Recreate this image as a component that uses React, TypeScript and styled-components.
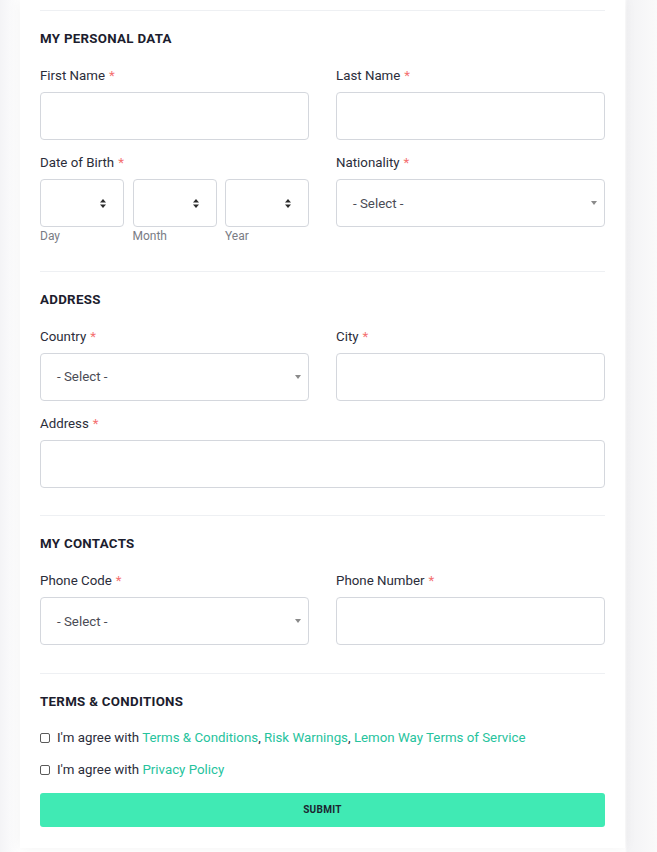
import React from "react";
import styled, { createGlobalStyle } from "styled-components";

const Global = createGlobalStyle`
  html, body { margin: 0; padding: 0; }
  body {
    background: #f6f7fa;
    font-family: Roboto, "Liberation Sans", Arial, sans-serif;
    color: #2b2d3a;
  }
  * { box-sizing: border-box; }
`;

const Page = styled.div`
  padding: 0 32px 4px 20px;
  background: linear-gradient(to right, #f4f4f6 0, #ffffff 20px, #ffffff 625px, #f3f3f5 627px, #fafafa 657px);
`;

const Card = styled.form`
  background: #fff;
  box-shadow: 0 0 12px rgba(0, 0, 0, 0.05);
  padding: 10px 20px 21px;
`;

const Section = styled.section`
  border-top: 1px solid #eef0f3;
  padding: 20px 0 27.5px;
  &:last-child { padding-bottom: 0; }
`;

const Heading = styled.h2<{ $tight?: boolean }>`
  margin: 0 0 ${(p) => (p.$tight ? "0" : "20px")};
  font-size: 13.3px;
  line-height: 16px;
  font-weight: 700;
  color: #1c1d2e;
  letter-spacing: 0.3px;
`;

const Grid = styled.div`
  display: grid;
  grid-template-columns: 1fr 1fr;
  column-gap: 27px;
  row-gap: 14px;
`;

const Field = styled.div<{ $full?: boolean }>`
  display: flex;
  flex-direction: column;
  grid-column: ${(p) => (p.$full ? "1 / -1" : "auto")};
`;

const Label = styled.label`
  font-size: 13.3px;
  line-height: 17px;
  color: #2b2d3a;
  margin-bottom: 8px;
`;

const Star = styled.span`
  color: #f47070;
  margin-left: 4px;
`;

const TextInput = styled.input`
  height: 48px;
  width: 100%;
  border: 1px solid #d4d7dd;
  border-radius: 4px;
  background: #fff;
  padding: 0 16px;
  font: inherit;
  outline: none;
`;

const SelectBox = styled.div`
  position: relative;
  height: 48px;
  border: 1px solid #d4d7dd;
  border-radius: 4px;
  background: #fff;
  display: flex;
  align-items: center;
  padding: 0 16px;
  font-size: 13.3px;
  color: #4a4c55;
`;

const Caret = styled.span`
  position: absolute;
  right: 7px;
  top: 50%;
  margin-top: -2px;
  width: 0;
  height: 0;
  border-left: 3px solid transparent;
  border-right: 3px solid transparent;
  border-top: 4px solid #8a8a8a;
`;

const UpDown = styled.svg`
  position: absolute;
  right: 17px;
  top: 50%;
  margin-top: -4px;
`;

const DateRow = styled.div`
  display: grid;
  grid-template-columns: repeat(3, 84px);
  column-gap: 8.5px;
`;

const DatePart = styled.div`
  display: flex;
  flex-direction: column;
`;

const SubLabel = styled.span`
  font-size: 12px;
  line-height: 14px;
  color: #7a7c85;
  margin-top: 2px;
`;

const CheckRow = styled.label<{ $first?: boolean }>`
  display: flex;
  align-items: center;
  font-size: 13.3px;
  line-height: 18px;
  color: #2b2d3a;
  margin-top: ${(p) => (p.$first ? "19px" : "14px")};
`;

const Box = styled.input`
  appearance: none;
  width: 10px;
  height: 10px;
  margin: 0 7px 0 0;
  border: 1px solid #5a5a5a;
  border-radius: 2px;
  background: #fff;
`;

const Link = styled.a`
  color: #26c39d;
  text-decoration: none;
`;

const Submit = styled.button`
  margin-top: 14px;
  width: 100%;
  height: 34px;
  border: none;
  border-radius: 3px;
  background: #40eab4;
  color: #1c2530;
  font-family: Roboto, "Liberation Sans", Arial, sans-serif;
  font-size: 10px;
  font-weight: 700;
  letter-spacing: 0.3px;
`;

const Req = ({ children }: { children: React.ReactNode }) => (
  <Label>
    {children}
    <Star>*</Star>
  </Label>
);

const Select = ({ text }: { text?: string }) => (
  <SelectBox>
    {text}
    <Caret />
  </SelectBox>
);

const SmallSelect = () => (
  <SelectBox>
    <UpDown width="6" height="9" viewBox="0 0 6 9">
      <path d="M0 3.6 L3 0 L6 3.6 Z" fill="#2b2b2b" />
      <path d="M0 5.4 L3 9 L6 5.4 Z" fill="#2b2b2b" />
    </UpDown>
  </SelectBox>
);

export default function App() {
  return (
    <>
      <Global />
      <Page>
        <Card onSubmit={(e) => e.preventDefault()}>
          <Section>
            <Heading>MY PERSONAL DATA</Heading>
            <Grid>
              <Field>
                <Req>First Name</Req>
                <TextInput />
              </Field>
              <Field>
                <Req>Last Name</Req>
                <TextInput />
              </Field>
              <Field>
                <Req>Date of Birth</Req>
                <DateRow>
                  {["Day", "Month", "Year"].map((d) => (
                    <DatePart key={d}>
                      <SmallSelect />
                      <SubLabel>{d}</SubLabel>
                    </DatePart>
                  ))}
                </DateRow>
              </Field>
              <Field>
                <Req>Nationality</Req>
                <Select text="- Select -" />
              </Field>
            </Grid>
          </Section>
          <Section>
            <Heading>ADDRESS</Heading>
            <Grid>
              <Field>
                <Req>Country</Req>
                <Select text="- Select -" />
              </Field>
              <Field>
                <Req>City</Req>
                <TextInput />
              </Field>
              <Field $full>
                <Req>Address</Req>
                <TextInput />
              </Field>
            </Grid>
          </Section>
          <Section>
            <Heading>MY CONTACTS</Heading>
            <Grid>
              <Field>
                <Req>Phone Code</Req>
                <Select text="- Select -" />
              </Field>
              <Field>
                <Req>Phone Number</Req>
                <TextInput />
              </Field>
            </Grid>
          </Section>
          <Section>
            <Heading $tight>TERMS &amp; CONDITIONS</Heading>
            <CheckRow $first>
              <Box type="checkbox" />
              <span>
                I'm agree with <Link>Terms &amp; Conditions</Link>, <Link>Risk Warnings</Link>,{" "}
                <Link>Lemon Way Terms of Service</Link>
              </span>
            </CheckRow>
            <CheckRow>
              <Box type="checkbox" />
              <span>
                I'm agree with <Link>Privacy Policy</Link>
              </span>
            </CheckRow>
            <Submit type="submit">SUBMIT</Submit>
          </Section>
        </Card>
      </Page>
    </>
  );
}
